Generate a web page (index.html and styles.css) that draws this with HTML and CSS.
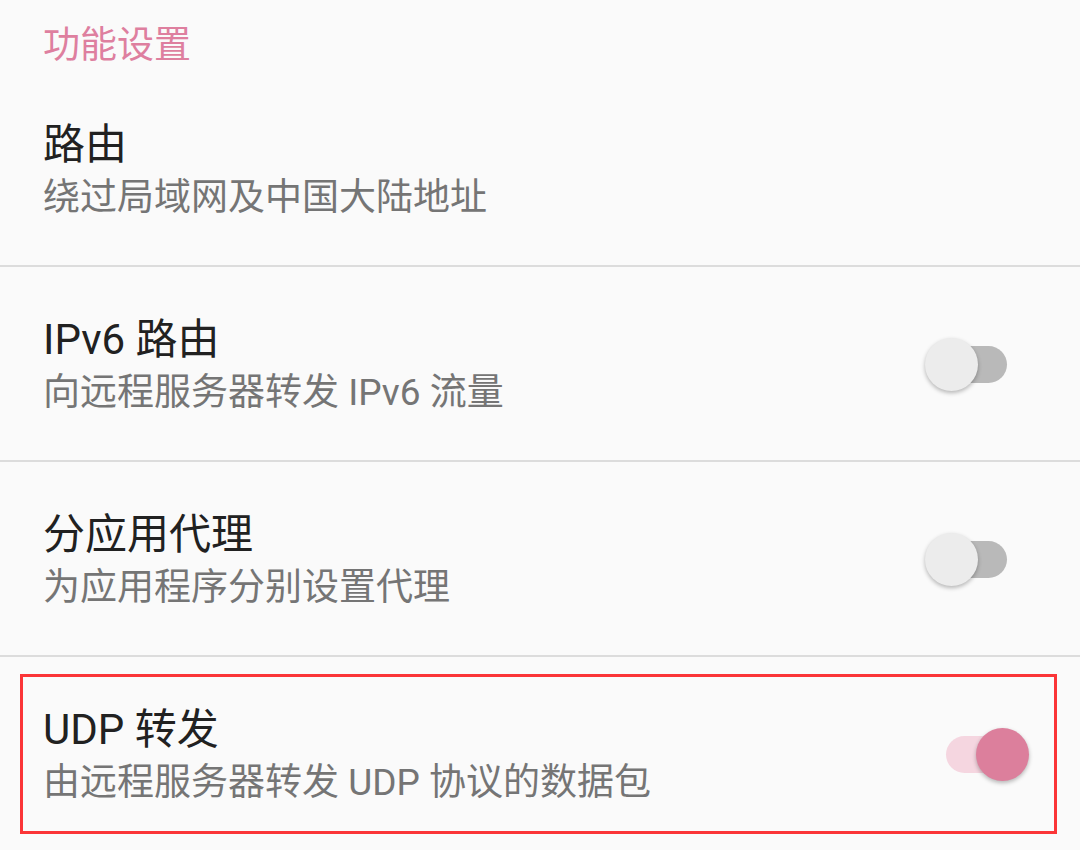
FILE: index.html
```html
<!DOCTYPE html>
<html lang="zh-CN">
<head>
<meta charset="utf-8">
<title>功能设置</title>
<link rel="stylesheet" href="styles.css">
</head>
<body>
<div class="screen">
  <div class="category">功能设置</div>

  <div class="pref">
    <div class="pref-text">
      <div class="pref-title">路由</div>
      <div class="pref-summary">绕过局域网及中国大陆地址</div>
    </div>
  </div>

  <div class="pref divided">
    <div class="pref-text">
      <div class="pref-title">IPv6 路由</div>
      <div class="pref-summary">向远程服务器转发 IPv6 流量</div>
    </div>
    <div class="switch">
      <div class="track"></div>
      <div class="thumb"></div>
    </div>
  </div>

  <div class="pref divided">
    <div class="pref-text">
      <div class="pref-title">分应用代理</div>
      <div class="pref-summary">为应用程序分别设置代理</div>
    </div>
    <div class="switch">
      <div class="track"></div>
      <div class="thumb"></div>
    </div>
  </div>

  <div class="pref divided highlighted">
    <div class="pref-text">
      <div class="pref-title">UDP 转发</div>
      <div class="pref-summary">由远程服务器转发 UDP 协议的数据包</div>
    </div>
    <div class="switch on">
      <div class="track"></div>
      <div class="thumb"></div>
    </div>
    <div class="highlight-box"></div>
  </div>
</div>
</body>
</html>
```

FILE: styles.css
```css
html, body {
  margin: 0;
  padding: 0;
  background: #fafafa;
}

body {
  font-family: Roboto, "Noto Sans CJK SC", sans-serif;
  width: 1080px;
  height: 850px;
  overflow: hidden;
}

.screen {
  display: flex;
  flex-direction: column;
}

.category {
  color: #de7f9f;
  font-size: 37px;
  line-height: 48px;
  padding: 22px 0 2px 43px;
}

.pref {
  position: relative;
  display: flex;
  align-items: center;
  padding: 47px 0 40px 43px;
}

.pref.divided {
  border-top: 2px solid #dcdcdc;
}

.pref-text {
  flex: 1;
  display: flex;
  flex-direction: column;
}

.pref-title {
  color: #212121;
  font-size: 42px;
  line-height: 52px;
}

.pref-summary {
  color: #757575;
  font-size: 37px;
  line-height: 54px;
}

.switch {
  position: relative;
  flex-shrink: 0;
  width: 104px;
  height: 53px;
  margin-right: 51px;
  margin-top: -6px;
}

.track {
  position: absolute;
  left: 21px;
  top: 8px;
  width: 61px;
  height: 37px;
  border-radius: 19px;
  background: #b9b9b9;
}

.thumb {
  position: absolute;
  left: 0;
  top: 0;
  width: 53px;
  height: 53px;
  border-radius: 50%;
  background: #ececec;
  box-shadow: 0 2px 4px rgba(0, 0, 0, 0.28);
}

.switch.on .track {
  background: #f5d6e0;
}

.switch.on .thumb {
  left: 51px;
  background: #dc7f9c;
}

.highlight-box {
  position: absolute;
  left: 20px;
  right: 23px;
  top: 17px;
  height: 154px;
  border: 3px solid #fb3537;
  pointer-events: none;
}
```
